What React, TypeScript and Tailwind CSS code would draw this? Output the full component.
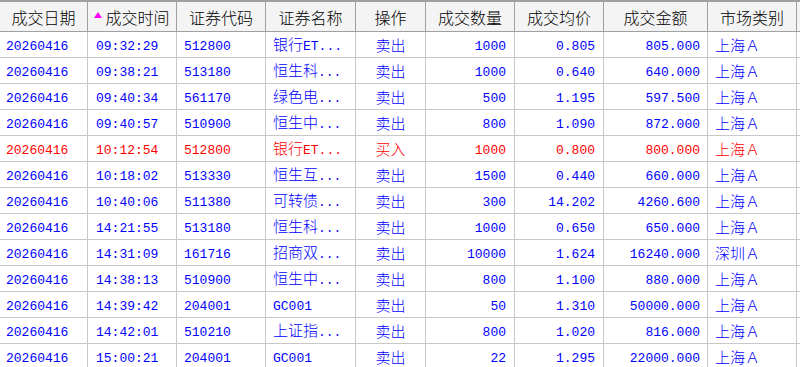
import React from "react";

const cols = "grid grid-cols-[88px_89px_89px_90px_70px_89px_89px_104px_89px_1fr]";

type Row = [string, string, string, string, string, string, string, string, string];

const rows: Row[] = [
  ["20260416", "09:32:29", "512800", "银行ET...", "卖出", "1000", "0.805", "805.000", "上海Ａ"],
  ["20260416", "09:38:21", "513180", "恒生科...", "卖出", "1000", "0.640", "640.000", "上海Ａ"],
  ["20260416", "09:40:34", "561170", "绿色电...", "卖出", "500", "1.195", "597.500", "上海Ａ"],
  ["20260416", "09:40:57", "510900", "恒生中...", "卖出", "800", "1.090", "872.000", "上海Ａ"],
  ["20260416", "10:12:54", "512800", "银行ET...", "买入", "1000", "0.800", "800.000", "上海Ａ"],
  ["20260416", "10:18:02", "513330", "恒生互...", "卖出", "1500", "0.440", "660.000", "上海Ａ"],
  ["20260416", "10:40:06", "511380", "可转债...", "卖出", "300", "14.202", "4260.600", "上海Ａ"],
  ["20260416", "14:21:55", "513180", "恒生科...", "卖出", "1000", "0.650", "650.000", "上海Ａ"],
  ["20260416", "14:31:09", "161716", "招商双...", "卖出", "10000", "1.624", "16240.000", "深圳Ａ"],
  ["20260416", "14:38:13", "510900", "恒生中...", "卖出", "800", "1.100", "880.000", "上海Ａ"],
  ["20260416", "14:39:42", "204001", "GC001", "卖出", "50", "1.310", "50000.000", "上海Ａ"],
  ["20260416", "14:42:01", "510210", "上证指...", "卖出", "800", "1.020", "816.000", "上海Ａ"],
  ["20260416", "15:00:21", "204001", "GC001", "卖出", "22", "1.295", "22000.000", "上海Ａ"],
];

const headers = ["成交日期", "成交时间", "证券代码", "证券名称", "操作", "成交数量", "成交均价", "成交金额", "市场类别"];

function Txt({ s }: { s: string }) {
  const parts = s.match(/[\u3000-\u9fff\uff00-\uffef]+|[^\u3000-\u9fff\uff00-\uffef]+/g) || [];
  return (
    <span className="leading-none">
      {parts.map((p, i) =>
        /[\u3000-\u9fff\uff00-\uffef]/.test(p) ? (
          <span key={i} className="text-[15px] font-light [font-family:'Noto_Sans_CJK_SC',sans-serif]">
            {p}
          </span>
        ) : (
          <span key={i} className="text-[13px] [font-family:'Liberation_Mono',monospace]">
            {p}
          </span>
        )
      )}
    </span>
  );
}

const align = [
  "justify-start pl-[6px]",
  "justify-start pl-[8px]",
  "justify-start pl-[7px]",
  "justify-start pl-[7px]",
  "justify-center",
  "justify-end pr-[8px]",
  "justify-end pr-[8px]",
  "justify-end pr-[7px]",
  "justify-start pl-[7px]",
];

export default function App() {
  return (
    <div className="w-[800px] h-[367px] overflow-hidden bg-white">
      <div className={`${cols} h-[32px] bg-[#f4f4f4] border-t-[2px] border-[#a0a0a0] border-b border-b-[#a0a0a0]`}>
        {headers.map((h, i) => (
          <div
            key={i}
            className="flex items-center justify-center border-r border-[#a0a0a0] text-black text-[16px] font-light leading-none [font-family:'Noto_Sans_CJK_SC',sans-serif]"
          >
            {i === 1 && (
              <svg width="8" height="6" viewBox="0 0 8 6" className="mr-[3px] mb-[4px]">
                <polygon points="4,0 8,6 0,6" fill="#ff00ff" />
              </svg>
            )}
            {h}
          </div>
        ))}
        <div />
      </div>
      {rows.map((r, ri) => {
        const red = ri === 4;
        return (
          <div
            key={ri}
            className={`${cols} h-[26px] border-b border-[#c8c8c8] ${red ? "text-[#ff0000]" : "text-[#0000ff]"}`}
          >
            {r.map((c, ci) => (
              <div
                key={ci}
                className={`flex items-center whitespace-nowrap overflow-hidden border-r border-[#c8c8c8] ${align[ci]}`}
              >
                <Txt s={c} />
              </div>
            ))}
            <div />
          </div>
        );
      })}
    </div>
  );
}
